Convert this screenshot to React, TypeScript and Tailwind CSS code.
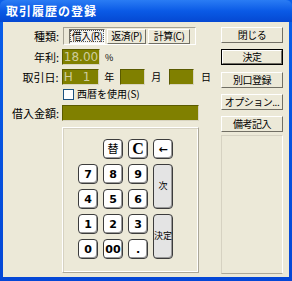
import React from "react";

const jp = { fontFamily: '"MS UI Gothic", "Noto Sans CJK JP", sans-serif' };

function Label({ text }: { text: string }) {
    return <div className="w-[56px] text-right text-[11px] leading-none text-black whitespace-nowrap">{text}</div>;
}

function OliveField({ className, children }: { className: string; children?: React.ReactNode }) {
    return (
        <div className={`flex items-center bg-[#808000] border border-t-[#5a5a00] border-l-[#5a5a00] border-b-[#d8d4c0] border-r-[#d8d4c0] text-[#cfcd9c] leading-none ${className}`}>
            {children}
        </div>
    );
}

function SideButton({ text, primary }: { text: string; primary?: boolean }) {
    return (
        <div className={`${primary ? "border border-black" : ""} w-[62px] h-[16px] flex`}>
            <div className="flex-1 flex items-center justify-center bg-[#ece9d8] border border-t-white border-l-white border-b-[#716f64] border-r-[#716f64] text-[10px] leading-none text-black whitespace-nowrap tracking-[-0.5px]">
                {text}
            </div>
        </div>
    );
}

function Key({ text, tall, serif, light }: { text: string; tall?: boolean; serif?: boolean; light?: boolean }) {
    return (
        <div
            className={`${tall ? "row-span-2 bg-[#e4e4e4] text-[9px] font-normal" : light ? "bg-white text-[11px] font-normal" : "bg-white text-[11px] font-bold"} ${serif ? "text-[16px]" : ""} flex items-center justify-center rounded-[4px] border border-[#3c3c3c] shadow-[inset_-1px_-1px_0_#9a9a9a] text-black leading-none whitespace-nowrap`}
            style={serif ? { fontFamily: '"Liberation Serif", serif' } : { fontFamily: '"DejaVu Sans", "Noto Sans CJK JP", sans-serif' }}
        >
            {text}
        </div>
    );
}

export default function App() {
    return (
        <div className="w-[292px] h-[281px] flex flex-col bg-gradient-to-b from-[#0a5fea] to-[#0547d6] overflow-hidden" style={jp}>
            <div className="h-[22px] flex items-center pl-[6px] bg-gradient-to-b from-[#2a7cf4] via-[#0a5ae6] to-[#0548d2] rounded-t-[6px]">
                <span className="text-white text-[12px] font-bold leading-none tracking-[1px]">取引履歴の登録</span>
            </div>
            <div className="flex-1 mx-[3px] mb-[4px] bg-[#ece9d8] flex">
                {/* left side */}
                <div className="w-[208px] flex flex-col pt-[5px]">
                    <div className="flex items-center h-[18px]">
                        <Label text="種類:" />
                        <div className="ml-[4px] w-[133px] h-[18px] flex items-center gap-[2px] px-[5px] border border-t-[#a5a293] border-l-[#a5a293] border-b-white border-r-white">
                            <div className="w-[36px] h-[15px] flex items-center justify-center border border-t-[#716f64] border-l-[#716f64] border-b-white border-r-white bg-[#f4f3ee] text-[10px] leading-none whitespace-nowrap tracking-[-0.5px]">
                                <span className="border border-dotted border-[#555] px-[1px]">借入(R)</span>
                            </div>
                            <div className="w-[39px] h-[15px] flex items-center justify-center border border-t-white border-l-white border-b-[#716f64] border-r-[#716f64] text-[10px] leading-none whitespace-nowrap tracking-[-0.5px]">返済(P)</div>
                            <div className="w-[42px] h-[15px] flex items-center justify-center border border-t-white border-l-white border-b-[#716f64] border-r-[#716f64] text-[10px] leading-none whitespace-nowrap tracking-[-0.5px]">計算(C)</div>
                        </div>
                    </div>
                    <div className="flex items-center h-[16px] mt-[4px]">
                        <Label text="年利:" />
                        <OliveField className="ml-[3px] w-[38px] h-[16px] justify-center">
                            <span style={{ fontFamily: '"DejaVu Sans", sans-serif' }} className="text-[12px]">18.00</span>
                        </OliveField>
                        <span className="ml-[5px] text-[9px] leading-none">%</span>
                    </div>
                    <div className="flex items-center h-[16px] mt-[4px]">
                        <Label text="取引日:" />
                        <OliveField className="ml-[3px] w-[38px] h-[16px] justify-end pr-[8px] gap-[10px]">
                            <span style={{ fontFamily: '"DejaVu Sans", sans-serif' }} className="text-[12px]">H</span>
                            <span style={{ fontFamily: '"DejaVu Sans", sans-serif' }} className="text-[12px]">1</span>
                        </OliveField>
                        <span className="ml-[5px] text-[10px] leading-none">年</span>
                        <OliveField className="ml-[6px] w-[25px] h-[16px]" />
                        <span className="ml-[6px] text-[10px] leading-none">月</span>
                        <OliveField className="ml-[8px] w-[25px] h-[16px]" />
                        <span className="ml-[7px] text-[10px] leading-none">日</span>
                    </div>
                    <div className="flex items-center h-[12px] mt-[3px] ml-[60px]">
                        <div className="w-[11px] h-[11px] bg-white border border-[#1c5180]" />
                        <span className="ml-[3px] text-[10px] leading-none whitespace-nowrap">西暦を使用(S)</span>
                    </div>
                    <div className="flex items-center h-[16px] mt-[5px]">
                        <Label text="借入金額:" />
                        <OliveField className="ml-[3px] w-[137px] h-[16px]" />
                    </div>
                    <div className="ml-[59px] mt-[6px] w-[137px] h-[146px] border border-t-white border-l-white border-b-[#aca899] border-r-[#aca899] shadow-[inset_1px_1px_0_#d6d2c2,inset_-1px_-1px_0_#fff]">
                        <div className="grid grid-cols-[20px_20px_20px_20px] grid-rows-[20px_20px_20px_20px_20px] gap-[5px] pl-[15px] pt-[11px]">
                            <div />
                            <Key text="替" light />
                            <Key text="C" serif />
                            <Key text="←" />
                            <Key text="7" />
                            <Key text="8" />
                            <Key text="9" />
                            <Key text="次" tall />
                            <Key text="4" />
                            <Key text="5" />
                            <Key text="6" />
                            <Key text="1" />
                            <Key text="2" />
                            <Key text="3" />
                            <Key text="決定" tall />
                            <Key text="0" />
                            <Key text="00" />
                            <Key text="." />
                        </div>
                    </div>
                </div>
                {/* right side */}
                <div className="ml-[10px] w-[62px] flex flex-col pt-[5px]">
                    <SideButton text="閉じる" />
                    <div className="mt-[6px]"><SideButton text="決定" primary /></div>
                    <div className="mt-[7px]"><SideButton text="別口登録" /></div>
                    <div className="mt-[6px]"><SideButton text="オプション..." /></div>
                    <div className="mt-[6px]"><SideButton text="備考記入" /></div>
                    <div className="mt-[3px] h-[139px] border border-t-[#d6d2c2] border-l-[#d6d2c2] border-b-[#aca899] border-r-white" />
                </div>
            </div>
        </div>
    );
}
